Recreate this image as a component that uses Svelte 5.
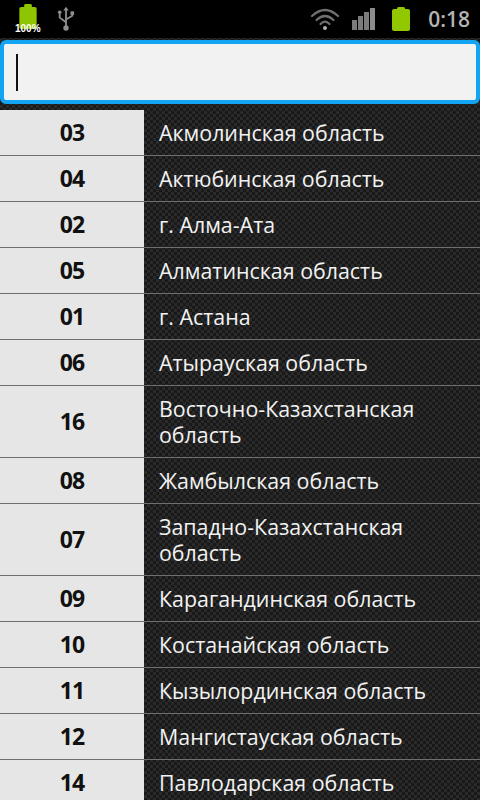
<script lang="ts">
  const regions = [
    { code: "03", name: "Акмолинская область" },
    { code: "04", name: "Актюбинская область" },
    { code: "02", name: "г. Алма-Ата" },
    { code: "05", name: "Алматинская область" },
    { code: "01", name: "г. Астана" },
    { code: "06", name: "Атырауская область" },
    { code: "16", name: "Восточно-Казахстанская область" },
    { code: "08", name: "Жамбылская область" },
    { code: "07", name: "Западно-Казахстанская область" },
    { code: "09", name: "Карагандинская область" },
    { code: "10", name: "Костанайская область" },
    { code: "11", name: "Кызылординская область" },
    { code: "12", name: "Мангистауская область" },
    { code: "14", name: "Павлодарская область" },
  ];
</script>

<div class="screen">
  <header class="status">
    <div class="left">
      <div class="charge">
        <svg width="22" height="25" viewBox="0 0 22 26">
          <path d="M7 1.500 Q7 0 8.500 0 H13.500 Q15 0 15 1.500 V3 H18 Q20 3 20 5 V24 Q20 26 18 26 H4 Q2 26 2 24 V5 Q2 3 4 3 H7 Z" fill="#8fc400" />
        </svg>
        <span>100%</span>
      </div>
      <svg class="usb" width="18" height="28" viewBox="0 0 20 27">
        <g fill="none" stroke="#8e8e8e" stroke-width="2">
          <path d="M10 3 V23" />
          <path d="M3 7 V12 L10 17" />
          <path d="M17 7 V10 L10 14" />
        </g>
        <path d="M10 0 L13 4 H7 Z" fill="#8e8e8e" />
        <circle cx="3" cy="6" r="2" fill="#8e8e8e" />
        <rect x="15" y="5" width="4" height="4" fill="#8e8e8e" />
        <circle cx="10" cy="23.500" r="3" fill="#8e8e8e" />
      </svg>
    </div>
    <div class="right">
      <svg width="30" height="24" viewBox="0 0 30 24">
        <g fill="none" stroke="#6f6f6f" stroke-width="2.200" stroke-linecap="round">
          <path d="M2 9 Q15 -3 28 9" />
          <path d="M6.500 13 Q15 5 23.500 13" />
          <path d="M10.500 17 Q15 12.500 19.500 17" />
        </g>
        <circle cx="15" cy="21" r="2" fill="#b0b0b0" />
      </svg>
      <svg class="signal" width="24" height="24" viewBox="0 0 24 24">
        <rect x="0" y="13" width="5" height="10" fill="#7c7c7c" />
        <rect x="6" y="9" width="5" height="14" fill="#7c7c7c" />
        <rect x="12" y="5" width="5" height="18" fill="#7c7c7c" />
        <rect x="18" y="1" width="5" height="22" fill="#8c8c8c" />
      </svg>
      <svg class="battery" width="20" height="26" viewBox="0 0 20 26">
        <path d="M6 2.500 Q6 1 7.500 1 H12.500 Q14 1 14 2.500 V3 H17 Q19 3 19 5 V23 Q19 25 17 25 H3 Q1 25 1 23 V5 Q1 3 3 3 H6 Z" fill="#92c800" />
      </svg>
      <span class="clock">0:18</span>
    </div>
  </header>

  <div class="search">
    <div class="field"><i class="caret"></i></div>
  </div>

  <ul class="list">
    {#each regions as region}
      <li class="row">
        <div class="code">{region.code}</div>
        <div class="name">{region.name}</div>
      </li>
    {/each}
  </ul>
</div>

<style>
  :global(body) {
    margin: 0;
    background: #1c1c1c;
  }

  .screen {
    width: 480px;
    height: 800px;
    overflow: hidden;
    display: flex;
    flex-direction: column;
    font-family: "Open Sans", "Noto Sans", sans-serif;
    background-color: #191919;
    background-image:
      linear-gradient(45deg, #2a2a2a 25%, transparent 25%, transparent 75%, #2a2a2a 75%),
      linear-gradient(45deg, #2a2a2a 25%, transparent 25%, transparent 75%, #2a2a2a 75%);
    background-size: 6px 6px;
    background-position: 0 0, 3px 3px;
  }

  .status {
    flex: none;
    height: 38px;
    background: #000;
    display: flex;
    justify-content: space-between;
    align-items: center;
    padding: 0 10px 0 17px;
  }

  .left,
  .right {
    display: flex;
    align-items: center;
  }

  .charge {
    position: relative;
    width: 22px;
    height: 30px;
    margin-right: 18px;
  }

  .charge span {
    position: absolute;
    left: -2px;
    top: 19px;
    color: #fff;
    font: bold 10px "Liberation Sans", sans-serif;
    white-space: nowrap;
  }

  .usb {
    margin-bottom: 1px;
  }

  .signal {
    margin-left: 12px;
  }

  .battery {
    margin-left: 15px;
  }

  .clock {
    margin-left: 17px;
    color: #b4b4b4;
    font-size: 21px;
    font-weight: 600;
  }

  .search {
    flex: none;
    height: 72px;
    box-sizing: border-box;
    padding-top: 2px;
  }

  .field {
    height: 64px;
    box-sizing: border-box;
    background: #f2f2f2;
    border: 4px solid #13a4f4;
    border-radius: 6px;
    display: flex;
    align-items: center;
    padding-left: 12px;
  }

  .caret {
    width: 2px;
    height: 37px;
    background: #111;
  }

  .list {
    list-style: none;
    margin: 0;
    padding: 0;
  }

  .row {
    display: flex;
    min-height: 45px;
    border-bottom: 1px solid #6e6e6e;
  }

  .code {
    flex: none;
    width: 144px;
    padding-bottom: 1px;
    box-sizing: border-box;
    background: #e6e6e6;
    color: #111;
    font-family: "Noto Sans", sans-serif;
    font-size: 23px;
    font-weight: 700;
    letter-spacing: -1px;
    display: flex;
    align-items: center;
    justify-content: center;
  }

  .name {
    flex: 1;
    box-sizing: border-box;
    padding: 10px 15px 9px 15px;
    color: #f2f2f2;
    font-size: 21.400px;
    line-height: 26px;
  }
</style>
